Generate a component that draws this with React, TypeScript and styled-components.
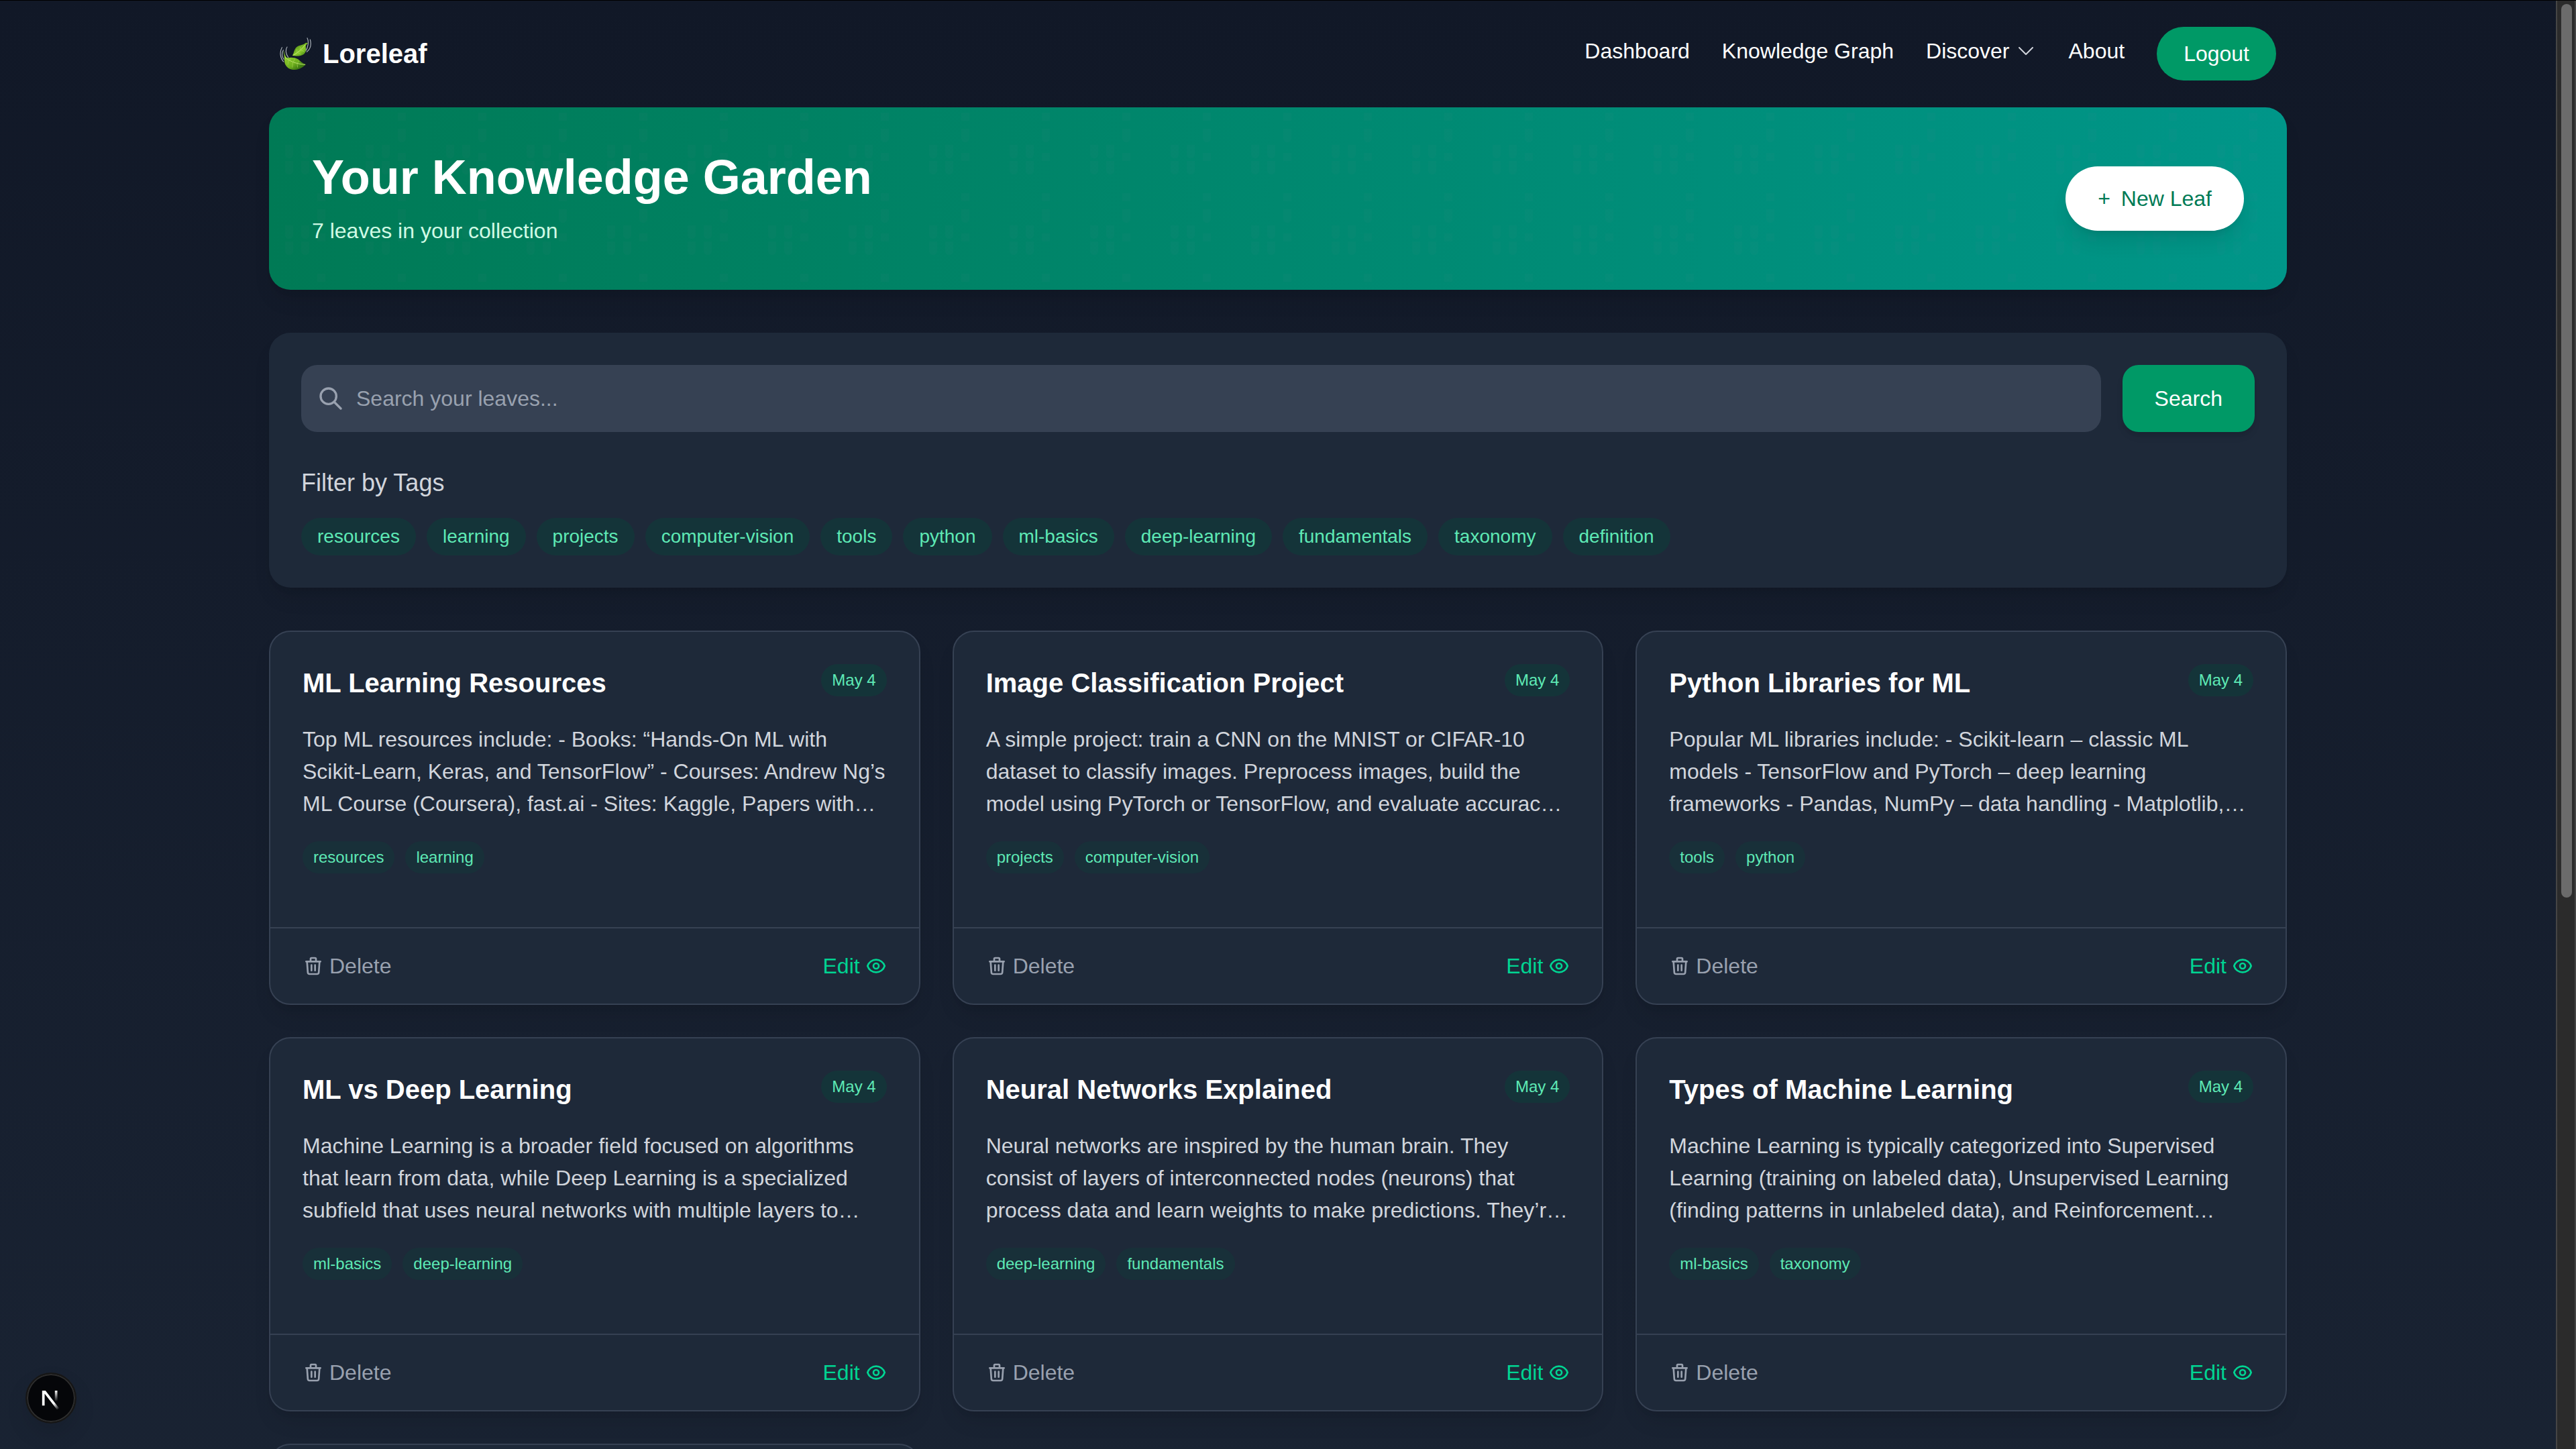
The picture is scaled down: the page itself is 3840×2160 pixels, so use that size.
import React from "react";
import styled, { createGlobalStyle, css } from "styled-components";

const color = {
  page: "#111827",
  pageEnd: "#1e2939",
  panel: "#1e2939",
  field: "#364153",
  line: "#364153",
  white: "#ffffff",
  body: "#d1d5dc",
  muted: "#99a1af",
  green: "#009966",
  greenDark: "#007a55",
  teal: "#009689",
  mint: "#5ee9b5",
  mintPale: "#d0fae5",
  edit: "#00d492",
};

const GlobalStyle = createGlobalStyle`
  *, *::before, *::after { box-sizing: border-box; }
  body {
    margin: 0;
    background: ${color.page};
    color: ${color.white};
    font-family: "Liberation Sans", Arial, sans-serif;
    font-size: 32px;
    line-height: 48px;
    -webkit-font-smoothing: antialiased;
  }
  h1, h2, h3, p, ul { margin: 0; padding: 0; }
  ul { list-style: none; }
  button, input { font: inherit; color: inherit; border: 0; margin: 0; }
  button { background: none; padding: 0; cursor: pointer; }
  a { color: inherit; text-decoration: none; }
  svg { display: block; flex: none; }
`;

const Frame = styled.div`
  position: relative;
  display: grid;
  grid-template-columns: minmax(0, 1fr) 30px;
  height: 100vh;
  overflow: hidden;

  &::after {
    content: "";
    position: absolute;
    inset: 0 0 auto;
    height: 1px;
    background: #000;
  }
`;

const Page = styled.div`
  overflow: hidden;
  background: linear-gradient(to bottom, ${color.page}, ${color.pageEnd} 160%);
`;

const Container = styled.div`
  max-width: 3072px;
  margin: 0 auto;
  padding: 0 32px;
`;

const Header = styled.header`
  display: flex;
  align-items: center;
  justify-content: space-between;
  padding: 40px 16px;
`;

const Brand = styled.a`
  display: flex;
  align-items: center;
  gap: 16px;
  font-size: 40px;
  line-height: 56px;
  font-weight: 700;
`;

const Nav = styled.nav`
  display: flex;
  align-items: center;
  gap: 48px;
`;

const navItem = css`
  display: flex;
  align-items: center;
  gap: 8px;
  padding-bottom: 8px;
`;

const NavLink = styled.a`
  ${navItem}
`;

const NavMenuButton = styled.button`
  ${navItem}

  svg { color: ${color.body}; }
`;

const LogoutButton = styled.button`
  padding: 16px 40px;
  border-radius: 40px;
  background: ${color.green};
`;

const Sections = styled.main`
  display: flex;
  flex-direction: column;
  gap: 64px;
`;

const Banner = styled.section`
  position: relative;
  display: flex;
  align-items: center;
  justify-content: space-between;
  padding: 64px;
  border-radius: 32px;
  background: linear-gradient(to right, ${color.greenDark}, ${color.teal});
  box-shadow: 0 20px 30px -6px rgba(0, 0, 0, 0.1), 0 8px 12px -8px rgba(0, 0, 0, 0.1);
`;

const BannerTexture = styled.svg`
  position: absolute;
  inset: 0;
  width: 100%;
  height: 100%;
  border-radius: 32px;
`;

const BannerText = styled.div`
  position: relative;
  display: grid;
  gap: 16px;
`;

const BannerTitle = styled.h1`
  font-size: 72px;
  line-height: 80px;
  font-weight: 700;
`;

const BannerNote = styled.p`
  color: ${color.mintPale};
`;

const NewLeafButton = styled.button`
  position: relative;
  display: flex;
  gap: 16px;
  padding: 24px 48px;
  border-radius: 48px;
  background: ${color.white};
  color: ${color.greenDark};
  box-shadow: 0 20px 30px -6px rgba(0, 0, 0, 0.1), 0 8px 12px -8px rgba(0, 0, 0, 0.1);
`;

const FilterPanel = styled.section`
  padding: 48px;
  border-radius: 32px;
  background: ${color.panel};
  box-shadow: 0 20px 30px -6px rgba(0, 0, 0, 0.1), 0 8px 12px -8px rgba(0, 0, 0, 0.1);
`;

const SearchForm = styled.form`
  display: flex;
  gap: 32px;
`;

const SearchField = styled.label`
  flex: 1;
  display: flex;
  align-items: center;
  gap: 18px;
  padding: 0 24px;
  border-radius: 24px;
  background: ${color.field};
  color: ${color.muted};
`;

const SearchInput = styled.input`
  flex: 1;
  min-width: 0;
  padding: 26px 0;
  background: none;
  outline: none;

  &::placeholder {
    color: ${color.muted};
    opacity: 1;
  }
`;

const SearchButton = styled.button`
  padding: 0 48px;
  border-radius: 24px;
  background: ${color.green};
  box-shadow: 0 8px 12px -2px rgba(0, 0, 0, 0.1), 0 4px 8px -4px rgba(0, 0, 0, 0.1);
`;

const FilterTitle = styled.h3`
  margin: 48px 0 24px;
  font-size: 36px;
  line-height: 56px;
  font-weight: 400;
  color: ${color.body};
`;

const TagRow = styled.ul`
  display: flex;
  flex-wrap: wrap;
  gap: 16px;
`;

const FilterChip = styled.button`
  display: block;
  padding: 8px 24px;
  border-radius: 28px;
  background: rgba(0, 79, 59, 0.3);
  color: ${color.mint};
  font-size: 28px;
  line-height: 40px;
`;

const Badge = styled.span<{ $strength: number }>`
  display: block;
  flex: none;
  padding: 8px 16px;
  border-radius: 24px;
  background: rgba(0, 79, 59, ${(p) => p.$strength});
  color: ${color.mint};
  font-size: 24px;
  line-height: 32px;
`;

const CardGrid = styled.div`
  display: grid;
  grid-template-columns: repeat(3, minmax(0, 1fr));
  grid-auto-rows: minmax(558px, auto);
  gap: 48px;
`;

const Card = styled.article`
  display: flex;
  flex-direction: column;
  border: 2px solid ${color.line};
  border-radius: 32px;
  background: ${color.panel};
  box-shadow: 0 20px 30px -6px rgba(0, 0, 0, 0.1), 0 8px 12px -8px rgba(0, 0, 0, 0.1);
`;

const CardBody = styled.div`
  flex: 1;
  display: flex;
  flex-direction: column;
  gap: 32px;
  padding: 48px;
`;

const CardHead = styled.div`
  display: flex;
  align-items: flex-start;
  justify-content: space-between;
`;

const CardTitle = styled.h2`
  font-size: 40px;
  line-height: 56px;
  font-weight: 700;
`;

const Excerpt = styled.p`
  color: ${color.body};
`;

const CardFoot = styled.footer`
  display: flex;
  justify-content: space-between;
  padding: 32px 48px;
  border-top: 2px solid ${color.line};
`;

const CardAction = styled.button<{ $tone: string }>`
  display: flex;
  align-items: center;
  gap: 8px;
  color: ${(p) => p.$tone};
`;

const ScrollTrack = styled.div`
  padding: 6px 4px 6px 6px;
  border: solid #454545;
  border-width: 0 2px;
  background: #2b2b2b;
`;

const ScrollThumb = styled.div`
  height: 62%;
  border-radius: 8px;
  background: #6b6b6b;
`;

const DevBadge = styled.button`
  position: fixed;
  left: 38px;
  bottom: 38px;
  width: 76px;
  height: 76px;
  border: 2px solid #171717;
  border-radius: 50%;
  background: #050609;
  box-shadow: inset 0 0 0 2px #2e2e2e, 0 16px 32px rgba(0, 0, 0, 0.1);
`;

const OutlineIcon = ({ d, size = 32, weight = 2 }: { d: string; size?: number; weight?: number }) => (
  <svg
    width={size}
    height={size}
    viewBox="0 0 24 24"
    fill="none"
    stroke="currentColor"
    strokeWidth={weight}
    strokeLinecap="round"
    strokeLinejoin="round"
    aria-hidden="true"
  >
    <path d={d} />
  </svg>
);

const icons = {
  chevron: "M19.5 8.25l-7.5 7.5-7.5-7.5",
  search: "M21 21l-6-6m2-5a7 7 0 11-14 0 7 7 0 0114 0z",
  trash:
    "M19 7l-.867 12.142A2 2 0 0116.138 21H7.862a2 2 0 01-1.995-1.858L5 7m5 4v6m4-6v6m1-10V4a1 1 0 00-1-1h-4a1 1 0 00-1 1v3M4 7h16",
  eye: "M15 12a3 3 0 11-6 0 3 3 0 016 0z M2.458 12C3.732 7.943 7.523 5 12 5c4.478 0 8.268 2.943 9.542 7-1.274 4.057-5.064 7-9.542 7-4.477 0-8.268-2.943-9.542-7z",
};

const LeafLogo = () => (
  <svg width="48" height="48" viewBox="0 0 144 144" fill="none" aria-hidden="true">
    <defs>
      <linearGradient id="leafLow" x1="30" y1="90" x2="70" y2="146" gradientUnits="userSpaceOnUse">
        <stop offset="0" stopColor="#8ecb2e" />
        <stop offset="0.6" stopColor="#6fb01e" />
        <stop offset="1" stopColor="#3f7a12" />
      </linearGradient>
      <linearGradient id="leafHigh" x1="80" y1="36" x2="112" y2="80" gradientUnits="userSpaceOnUse">
        <stop offset="0" stopColor="#5f9d1c" />
        <stop offset="0.5" stopColor="#8ccb2c" />
        <stop offset="1" stopColor="#4b8a16" />
      </linearGradient>
    </defs>
    <g stroke="#a9b0b8" strokeWidth="3.5" strokeLinecap="round">
      <path d="M123 2C131 18 127 44 116 60" />
      <path d="M136 9C142 30 138 50 121 64" />
      <path d="M10 44C-1 64 1 90 17 108" />
      <path d="M16 56C8 70 9 84 18 97" />
      <path d="M33 42C24 54 27 74 38 88" />
    </g>
    <path
      d="M18 60C22 76 26 86 32 91C48 88 68 88 82 97C92 105 102 116 117 121C102 132 92 143 68 144C42 146 26 130 22 112C20 98 22 80 17 62Z"
      fill="url(#leafLow)"
    />
    <path d="M24 88C40 104 72 118 114 121" stroke="#b9df6a" strokeWidth="3" />
    <path
      d="M44 102L50 92M60 110L68 94M78 116L86 104M40 102L36 122M58 111L56 134M78 117L80 134"
      stroke="#a5d450"
      strokeWidth="2"
    />
    <path
      d="M56 81C64 70 64 52 76 42C88 33 104 34 112 27C116 22 122 22 126 26C120 28 116 34 116 42C118 54 118 66 108 74C96 83 76 84 56 81Z"
      fill="url(#leafHigh)"
    />
    <path d="M60 79C80 68 100 52 114 32" stroke="#c4e57c" strokeWidth="3" />
    <path d="M78 68L76 52M92 58L92 42M80 68L94 74M94 56L108 62" stroke="#a9d858" strokeWidth="2" />
  </svg>
);

const GardenTexture = () => (
  <BannerTexture aria-hidden="true">
    <defs>
      <pattern id="sprouts" width="120" height="120" patternUnits="userSpaceOnUse">
        <path
          fill="#9c92ac"
          fillOpacity="0.03"
          d="M72 8h12v12h-12zM72 68h12v12h-12zM72 32h12v14a6 6 0 01-12 0zM24 56h12v14a6 6 0 01-12 0zM48 56h12v14a6 6 0 01-12 0zM24 80h12v14a6 6 0 01-12 0zM48 80h12v14a6 6 0 01-12 0z"
        />
      </pattern>
    </defs>
    <rect width="100%" height="100%" fill="url(#sprouts)" />
  </BannerTexture>
);

const DevLogo = () => (
  <svg width="72" height="72" viewBox="0 0 36 36" fill="none" aria-hidden="true">
    <defs>
      <linearGradient id="stroke0" x1="9.95" y1="11.12" x2="13.6" y2="15.6" gradientUnits="userSpaceOnUse">
        <stop stopColor="#fff" />
        <stop offset="1" stopColor="#fff" stopOpacity="0" />
      </linearGradient>
      <linearGradient id="stroke1" x1="11.82" y1="1.4" x2="11.8" y2="9.6" gradientUnits="userSpaceOnUse">
        <stop stopColor="#fff" />
        <stop offset="1" stopColor="#fff" stopOpacity="0" />
      </linearGradient>
      <mask id="capMask" maskUnits="userSpaceOnUse" x="0" y="0" width="18" height="18">
        <rect width="18" height="18" fill="#fff" />
        <rect width="5" height="1.5" fill="#000" />
      </mask>
    </defs>
    <g transform="translate(10 11)">
      <path d="M13.3 15.2L2.34 1V12.6" stroke="url(#stroke0)" strokeWidth="1.86" mask="url(#capMask)" />
      <path d="M11.825 1.5V13.1" stroke="url(#stroke1)" strokeWidth="1.86" />
    </g>
  </svg>
);

const filterTags = [
  "resources",
  "learning",
  "projects",
  "computer-vision",
  "tools",
  "python",
  "ml-basics",
  "deep-learning",
  "fundamentals",
  "taxonomy",
  "definition",
];

const leaves = [
  {
    title: "ML Learning Resources",
    excerpt:
      "Top ML resources include: - Books: “Hands-On ML with Scikit-Learn, Keras, and TensorFlow” - Courses: Andrew Ng’s ML Course (Coursera), fast.ai - Sites: Kaggle, Papers with…",
    tags: ["resources", "learning"],
  },
  {
    title: "Image Classification Project",
    excerpt:
      "A simple project: train a CNN on the MNIST or CIFAR-10 dataset to classify images. Preprocess images, build the model using PyTorch or TensorFlow, and evaluate accurac…",
    tags: ["projects", "computer-vision"],
  },
  {
    title: "Python Libraries for ML",
    excerpt:
      "Popular ML libraries include: - Scikit-learn – classic ML models - TensorFlow and PyTorch – deep learning frameworks - Pandas, NumPy – data handling - Matplotlib,…",
    tags: ["tools", "python"],
  },
  {
    title: "ML vs Deep Learning",
    excerpt:
      "Machine Learning is a broader field focused on algorithms that learn from data, while Deep Learning is a specialized subfield that uses neural networks with multiple layers to…",
    tags: ["ml-basics", "deep-learning"],
  },
  {
    title: "Neural Networks Explained",
    excerpt:
      "Neural networks are inspired by the human brain. They consist of layers of interconnected nodes (neurons) that process data and learn weights to make predictions. They’r…",
    tags: ["deep-learning", "fundamentals"],
  },
  {
    title: "Types of Machine Learning",
    excerpt:
      "Machine Learning is typically categorized into Supervised Learning (training on labeled data), Unsupervised Learning (finding patterns in unlabeled data), and Reinforcement…",
    tags: ["ml-basics", "taxonomy"],
  },
];

const LeafCard = ({ title, excerpt, tags }: (typeof leaves)[number]) => (
  <Card>
    <CardBody>
      <CardHead>
        <CardTitle>{title}</CardTitle>
        <Badge $strength={0.3}>May 4</Badge>
      </CardHead>
      <Excerpt>{excerpt}</Excerpt>
      <TagRow>
        {tags.map((tag) => (
          <li key={tag}>
            <Badge $strength={0.2}>{tag}</Badge>
          </li>
        ))}
      </TagRow>
    </CardBody>
    <CardFoot>
      <CardAction type="button" $tone={color.muted}>
        <OutlineIcon d={icons.trash} />
        Delete
      </CardAction>
      <CardAction type="button" $tone={color.edit}>
        Edit
        <OutlineIcon d={icons.eye} />
      </CardAction>
    </CardFoot>
  </Card>
);

export default function App() {
  return (
    <>
      <GlobalStyle />
      <Frame>
        <Page>
          <Container>
            <Header>
              <Brand href="#home">
                <LeafLogo />
                Loreleaf
              </Brand>
              <Nav>
                <NavLink href="#dashboard">Dashboard</NavLink>
                <NavLink href="#graph">Knowledge Graph</NavLink>
                <NavMenuButton type="button">
                  Discover
                  <OutlineIcon d={icons.chevron} weight={1.5} />
                </NavMenuButton>
                <NavLink href="#about">About</NavLink>
                <LogoutButton type="button">Logout</LogoutButton>
              </Nav>
            </Header>

            <Sections>
              <Banner>
                <GardenTexture />
                <BannerText>
                  <BannerTitle>Your Knowledge Garden</BannerTitle>
                  <BannerNote>7 leaves in your collection</BannerNote>
                </BannerText>
                <NewLeafButton type="button">
                  <span>+</span>
                  <span>New Leaf</span>
                </NewLeafButton>
              </Banner>

              <FilterPanel>
                <SearchForm onSubmit={(e) => e.preventDefault()}>
                  <SearchField>
                    <OutlineIcon d={icons.search} size={40} />
                    <SearchInput type="text" placeholder="Search your leaves..." aria-label="Search your leaves" />
                  </SearchField>
                  <SearchButton type="submit">Search</SearchButton>
                </SearchForm>
                <FilterTitle>Filter by Tags</FilterTitle>
                <TagRow>
                  {filterTags.map((tag) => (
                    <li key={tag}>
                      <FilterChip type="button">{tag}</FilterChip>
                    </li>
                  ))}
                </TagRow>
              </FilterPanel>

              <CardGrid>
                {leaves.map((leaf) => (
                  <LeafCard key={leaf.title} {...leaf} />
                ))}
                <Card />
              </CardGrid>
            </Sections>
          </Container>
        </Page>
        <ScrollTrack>
          <ScrollThumb />
        </ScrollTrack>
      </Frame>
      <DevBadge type="button" aria-label="Open developer tools">
        <DevLogo />
      </DevBadge>
    </>
  );
}
